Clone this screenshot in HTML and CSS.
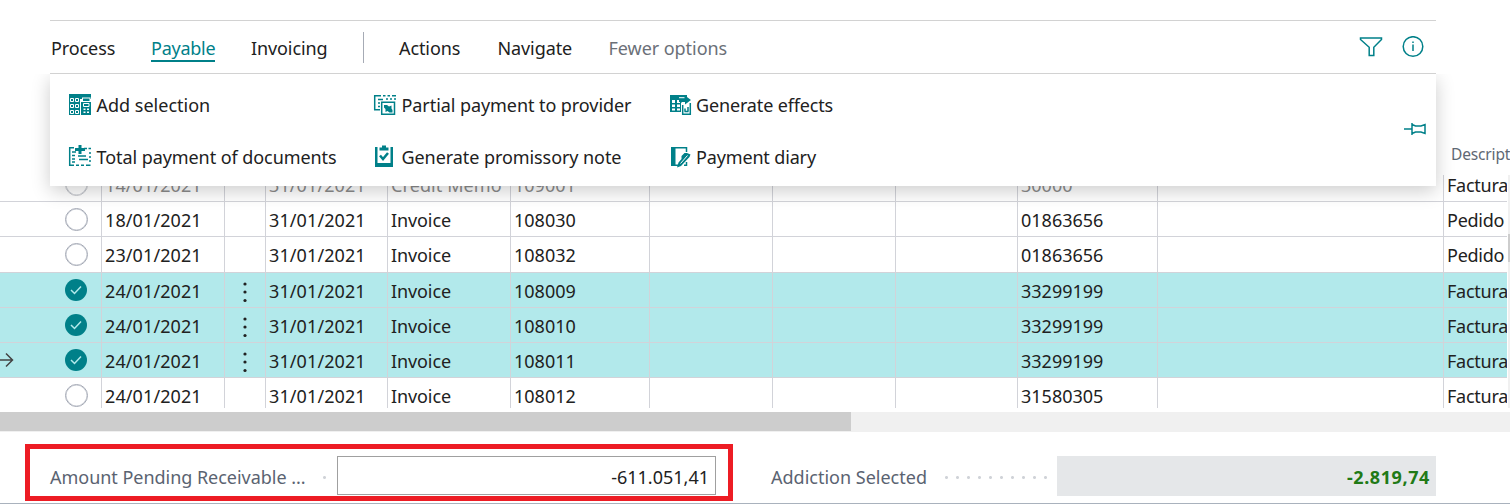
FILE: index.html
```html
<!DOCTYPE html>
<html lang="en">
<head>
    <meta charset="UTF-8">
    <meta name="viewport" content="width=device-width, initial-scale=1.0">
    <title>Payable documents</title>
    <link rel="stylesheet" href="styles.css">
</head>
<body>
    <header class="toolbar">
        <nav class="tabs">
            <a class="process">Process</a>
            <a class="active">Payable</a>
            <a class="invoicing">Invoicing</a>
            <span class="divider"></span>
            <a class="actions">Actions</a>
            <a class="navigate">Navigate</a>
            <a class="fewer">Fewer options</a>
        </nav>
        <div class="tools">
            <svg width="24" height="22" viewBox="0 0 24 22"><path d="M1.500 2h21v1.500l-7.700 7.800v8.200h-4.600v-8.200l-8.700-7.800z"/></svg>
            <svg width="22" height="22" viewBox="0 0 22 22"><circle cx="11" cy="10.500" r="9.800"/><path d="M11 8.500V15M11 5.500V7"/></svg>
        </div>

        <div class="menu">
            <a class="item add">
                <svg width="24" height="24" viewBox="0 0 24 24">
                    <path class="fill" d="M1 1h22v5H1zM1 5h11v17H1z"/>
                    <path class="light" d="M2.500 5.500h3v3h-3zM7.500 5.500h3v3h-3zM2.500 11.500h3v3h-3zM7.500 11.500h3v3h-3zM2.500 17.500h3v3h-3zM7.500 17.500h3v3h-3z"/>
                    <path class="paper" d="M12 8h2V4.500h8.500V8h.5v14H12z"/>
                    <path class="fill" d="M15 5.500h6.500V8H15zM13 9h10v13H13z"/>
                    <path class="light" d="M15.500 10.500h5.500v3h-5.500z"/>
                    <path class="paper" d="M15.500 15.500h2v1.500h-2zM19 15.500h2v1.500h-2zM15.500 18.500h2v1.500h-2zM19 18.500h2v1.500h-2z"/>
                </svg>
                <span>Add selection</span>
            </a>
            <a class="item partial">
                <svg width="24" height="24" viewBox="0 0 24 24">
                    <path d="M1.700 17V2.700H8M5 6.500h5M5 10h2M5 13.500h2M1 16.800h6"/>
                    <path d="M10 2.700h2.500M14.500 2.700H17M19 2.700h4M13 6h2M17 6h2M22 5v2"/>
                    <path d="M8.700 9.200h12.800v12H8.700z"/>
                    <path class="fill" d="M11 12h3l2 1.500 2.500-1v3l1 1.500v2.500h-3l-2-1.500-2 1v-3l-1.500-1.500z"/>
                </svg>
                <span>Partial payment to provider</span>
            </a>
            <a class="item effects">
                <svg width="24" height="24" viewBox="0 0 24 24">
                    <path class="fill" d="M1 2h17v5h-5v12H1z"/>
                    <path class="paper" d="M3 7h3v3H3zM8 7h3v3H8zM3 11.500h3v2.500H3zM8 11.500h3V14H8zM3 15.500h3v2H3zM8 15.500h3v2H8z"/>
                    <path class="paper" d="M12 9.500h10V22H12z"/>
                    <path d="M13.700 12v9.300h7.600V10M16 18.500v-3M19 18.500V14M15.500 18.500h4"/>
                    <path class="fill" d="M10 5.500h6V2.500L22 7l-6 4.500V9h-6z"/>
                    <path class="slash" d="M10 4.700h5.500"/>
                </svg>
                <span>Generate effects</span>
            </a>
            <a class="item total">
                <svg width="24" height="24" viewBox="0 0 24 24">
                    <path d="M6 2.700H1.700v17.600H6M4 7h4M4 10.500h3M4 14h3M4 17h3"/>
                    <path d="M16 3.500h3M20.500 3.500H23M10 11h8M11 14.500h9M22 7v2M22 11v2M22 15v2M8 20.300h3M13 20.300h3M18 20.300h4.500"/>
                    <path class="fill" d="M10.500 0h3v3H17v3h-3.500v3h-3V6H7V3h3.500z"/>
                </svg>
                <span>Total payment of documents</span>
            </a>
            <a class="item note">
                <svg width="24" height="24" viewBox="0 0 24 24">
                    <path class="fill" d="M2 2h18v20H2z"/>
                    <path class="paper" d="M4.500 1h13v17h-13z"/>
                    <path class="fill" d="M6.500 2.500H9v-2h4v2h2.500v3h-9z"/>
                    <path class="tick" d="M7 10.500l3 3.500 5-6"/>
                </svg>
                <span>Generate promissory note</span>
            </a>
            <a class="item diary">
                <svg width="24" height="24" viewBox="0 0 24 24">
                    <path class="fill" d="M2 2h4.500v19H2z"/>
                    <path d="M5 2.700h12.500V7M6 20.300h3M17.500 17v3.300H15"/>
                    <path class="fill" d="M8 22.500l1.500-5 3-3.500v-3l3-3H18l3.500 1.500-1 2.500-8.500 9z"/>
                    <path class="slash" d="M11.500 18.500l7-8"/>
                </svg>
                <span>Payment diary</span>
            </a>
            <svg class="pin" width="24" height="16" viewBox="0 0 24 16"><path d="M1 8h8M9 2v12M9 3.500l3.500 1.500H18l4-1.500v9L18 11h-5.500L9 12.500"/></svg>
        </div>
    </header>

    <main class="grid">
        <div class="grid-head"><span>Descript</span></div>
        <div class="grid-body" id="rows"></div>
        <div class="vscroll"><div class="vthumb"></div></div>
    </main>
    <div class="hscroll"><div class="hthumb"></div></div>

    <footer class="totals">
        <div class="pending">
            <label>Amount Pending Receivable ...</label>
            <i class="dots"></i>
            <output>-611.051,41</output>
        </div>
        <div class="selected">
            <label>Addiction Selected</label>
            <i class="dots"></i>
            <output>-2.819,74</output>
        </div>
    </footer>

    <script>
        // date, due date, type, number, provider, description, state
        const documents = [
            ['14/01/2021', '31/01/2021', 'Credit Memo', '109001', '30000', 'Factura', 'faded'],
            ['18/01/2021', '31/01/2021', 'Invoice', '108030', '01863656', 'Pedido', ''],
            ['23/01/2021', '31/01/2021', 'Invoice', '108032', '01863656', 'Pedido', ''],
            ['24/01/2021', '31/01/2021', 'Invoice', '108009', '33299199', 'Factura', 'checked'],
            ['24/01/2021', '31/01/2021', 'Invoice', '108010', '33299199', 'Factura', 'checked'],
            ['24/01/2021', '31/01/2021', 'Invoice', '108011', '33299199', 'Factura', 'checked current'],
            ['24/01/2021', '31/01/2021', 'Invoice', '108012', '31580305', 'Factura', ''],
        ];

        const tick = '<svg width="22" height="22" viewBox="0 0 22 22"><path d="M6 11l3.500 3.500 6.500-7"/></svg>';
        const arrow = '<svg class="arrow" width="14" height="16" viewBox="0 0 14 16"><path d="M0 8h12.500M6 1.500L12.500 8 6 14.500"/></svg>';
        const dots = '<svg class="more" width="6" height="22" viewBox="0 0 6 22"><circle cx="3" cy="3" r="1.600"/><circle cx="3" cy="11" r="1.600"/><circle cx="3" cy="19.500" r="1.600"/></svg>';

        document.getElementById('rows').innerHTML = documents.map(([date, due, type, number, provider, text, state]) => {
            const checked = state.includes('checked');
            return `<div class="row ${state}">
                <div class="select">${state.includes('current') ? arrow : ''}<span class="radio">${checked ? tick : ''}</span></div>
                <div class="date">${date}</div>
                <div>${checked ? dots : ''}</div>
                <div class="date">${due}</div>
                <div class="type">${type}</div>
                <div>${number}</div>
                <div></div><div></div><div></div>
                <div>${provider}</div>
                <div></div>
                <div class="text">${text}</div>
            </div>`;
        }).join('');
    </script>
</body>
</html>
```
FILE: styles.css
```css
* {
    box-sizing: border-box;
}

body {
    margin: 0;
    height: 504px;
    overflow: hidden;
    display: flex;
    flex-direction: column;
    background: #fff;
    color: #212121;
    font-family: 'Noto Sans', sans-serif;
    font-size: 18px;
}

svg {
    display: block;
    flex: none;
    fill: none;
    stroke: #008089;
    stroke-width: 1.5;
}

/* toolbar */
.toolbar {
    position: relative;
    z-index: 2;
    display: flex;
    justify-content: space-between;
    width: 1386px;
    height: 54px;
    margin: 20px 0 0 50px;
    border-top: 1px solid #d2d2d2;
    border-bottom: 1px solid #d2d2d2;
}

.tabs {
    display: grid;
    grid-template-columns: 100px 100px 112px 36px 98.5px 111px auto;
    padding-left: 1px;
    line-height: 54px;
    letter-spacing: -0.1px;
    white-space: nowrap;
}

.tabs .active {
    justify-self: start;
    width: 64px;
    height: 41px;
    color: #008089;
    letter-spacing: -0.25px;
    border-bottom: 2px solid #008089;
}

.tabs .fewer {
    color: #6b7078;
    letter-spacing: -0.05px;
}

.divider {
    width: 1px;
    height: 31px;
    margin-top: 11px;
    background: #a6abb5;
}

.tools {
    display: flex;
    gap: 19px;
    padding: 15px 12px 0 0;
}

/* drop-down menu under the active tab */
.menu {
    position: absolute;
    top: 53px;
    left: 0;
    width: 1386px;
    height: 112px;
    display: grid;
    grid-template-columns: 305px 295px 1fr;
    grid-template-rows: 52px 52px;
    padding: 5px 0 0 18px;
    background: #fff;
    box-shadow: 0 5px 18px rgba(0, 0, 0, 0.2);
    clip-path: inset(0 -30px -30px -30px);
}

.item {
    display: flex;
    align-items: center;
    gap: 4px;
    letter-spacing: -0.07px;
    white-space: nowrap;
}

.add {
    gap: 4.5px;
    letter-spacing: 0;
}

.total,
.partial,
.note {
    gap: 4.5px;
}

.effects,
.diary {
    gap: 3px;
    padding-left: 1px;
    letter-spacing: -0.15px;
}

.item .fill {
    fill: #008089;
    stroke: none;
}

.item .paper {
    fill: #fff;
    stroke: none;
}

.item .light {
    fill: #008089;
    stroke: #fff;
    stroke-width: 1;
}

.item .slash {
    stroke: #fff;
    stroke-width: 1;
}

.item .tick {
    stroke-width: 2.5;
}

.pin {
    position: absolute;
    top: 47px;
    right: 9.5px;
}

/* grid */
.grid {
    display: grid;
    grid-template-columns: 1507px 3px;
    grid-template-rows: 101px 233px;
    height: 334px;
}

.grid-head {
    grid-column: 1 / 3;
    padding: 70px 0 0 1451px;
    color: #5f6874;
    font-size: 15.5px;
    letter-spacing: -0.15px;
    line-height: 20px;
}

.grid-body {
    overflow: hidden;
}

.row {
    display: grid;
    grid-template-columns: 101px 123px 41px 122px 123px 139px 123px 123px 122px 140px 286px 64px;
    height: 35px;
    border-bottom: 1px solid #d2d3d9;
    line-height: 36px;
    white-space: nowrap;
}

.row:first-child {
    margin-top: -8px;
}

.row:nth-child(3) {
    height: 36px;
}

.row > div {
    padding-left: 3px;
    border-left: 1px solid #d2d3d9;
}

.row > .select {
    display: flex;
    justify-content: flex-end;
    padding: 6px 13px 0 0;
    border-left: none;
}

.row > .date {
    letter-spacing: 0.1px;
}

.row > .type {
    letter-spacing: -0.1px;
}

.row > .text {
    letter-spacing: -0.25px;
}

.faded {
    color: #8c8c8c;
}

.row.faded > .type {
    letter-spacing: 0.1px;
}

.faded .text {
    color: #212121;
}

.checked {
    background: #b2e9eb;
}

.radio {
    width: 23px;
    height: 23px;
    border: 1px solid #a3a8b4;
    border-radius: 50%;
    box-shadow: inset 0 0 0 0.5px #c4c8d0;
}

.faded .radio {
    border-color: #c4c6cb;
}

.checked .radio {
    width: 22px;
    height: 22px;
    margin-right: 1px;
    border: none;
    background: #008089;
    box-shadow: none;
}

.checked .radio svg {
    stroke: #b2e9eb;
}

.arrow {
    margin: 3px auto 0 0;
    stroke: #444;
}

.more {
    margin: 8px 0 0 14px;
    fill: #212121;
    stroke: none;
}

.vscroll {
    margin-left: 1px;
    padding-top: 59px;
    background: #f0f0f0;
}

.vthumb {
    height: 28px;
    background: #cdcdcd;
}

.hscroll {
    flex: none;
    height: 20px;
    margin-top: 4px;
    background: #f0f0f0;
}

.hthumb {
    width: 851px;
    height: 19px;
    background: #cdcdcd;
}

/* totals */
.totals {
    display: flex;
    gap: 38px;
    height: 72px;
    padding: 12px 0 0 25px;
    border-bottom: 1px solid #a9b2bd;
    color: #5a6371;
    line-height: 42px;
    white-space: nowrap;
}

.pending,
.selected {
    display: flex;
}

.pending {
    width: 708px;
    height: 57px;
    padding: 7px 12px 0 20px;
    border: 5px solid #ed1c24;
}

.selected {
    width: 665px;
    padding-top: 12px;
}

.dots {
    flex: none;
    height: 3px;
    background: radial-gradient(circle at 1.5px 1.5px, #d0d3d8 1px, transparent 2px) 0 0 / 11px 3px;
}

.pending label {
    width: 273px;
    letter-spacing: -0.03px;
    line-height: 43px;
}

.pending .dots {
    width: 3px;
    margin: 20px 11px 0 0;
}

.selected label {
    width: 174px;
    line-height: 43px;
}

.selected .dots {
    width: 102px;
    margin: 20px 10px 0 0;
}

output {
    flex: 1;
    height: 40px;
    padding-right: 7px;
    text-align: right;
}

.pending output {
    height: 39px;
    padding-right: 6px;
    border: 1px solid #a0a0a0;
    color: #212121;
    line-height: 40px;
}

.selected output {
    padding-right: 6px;
    background: #e5e7e9;
    color: #217a16;
    font-weight: 700;
    letter-spacing: 0.6px;
}
```
